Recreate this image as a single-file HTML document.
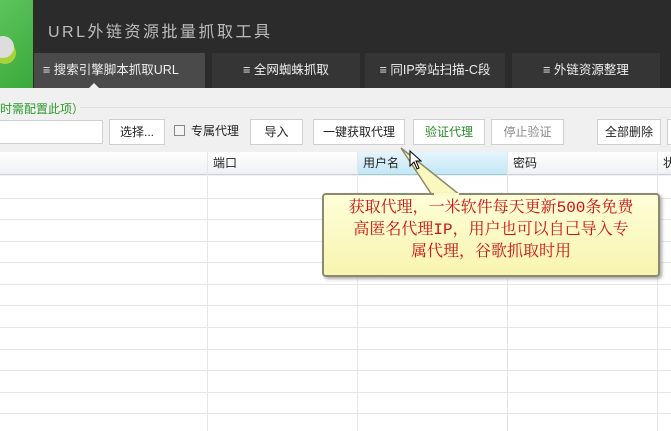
<!DOCTYPE html>
<html><head><meta charset="utf-8"><style>
*{margin:0;padding:0;box-sizing:border-box}
body{width:671px;height:431px;overflow:hidden;background:#f0f0f0;position:relative;font-family:"Liberation Sans","Noto Sans CJK SC",sans-serif;font-size:12px;color:#222}
.a{position:absolute}
.hdr{left:0;top:0;width:671px;height:88px;background:#2b2b2b}
.logo{left:0;top:0;width:33px;height:88px;background:linear-gradient(135deg,#5cc55c,#3aa83a)}
.title{left:48px;top:18px;color:#bdbdbd;font-size:16px;letter-spacing:2.5px}
.tab{top:53px;height:35px;background:#353535;color:#eee;font-size:12.5px;line-height:35px;text-align:center}
.btn{top:119px;height:26px;background:#fff;border:1px solid #cfcfcf;line-height:24px;text-align:center;font-size:12px}
.hl{left:0;width:671px;height:1px;background:#e6e6e6}
.vl{top:152px;width:1px;height:279px;background:#e6e6e6}
.th{top:152px;height:23px;line-height:23px;padding-left:6px;font-size:12px}
</style></head><body>
<div class="a hdr"></div>
<div class="a logo"></div>
<div class="a" style="left:-8px;top:36px;width:22px;height:22px;border-radius:50%;background:#ddd;box-shadow:2px 6px 0 #a8d13a"></div>
<div class="a title">URL外链资源批量抓取工具</div>
<div class="a tab" style="left:34px;width:171px;background:#4a4a4a;text-align:left;padding-left:9px">≡ 搜索引擎脚本抓取URL</div>
<div class="a" style="left:88px;top:83px;width:0;height:0;border-left:6px solid transparent;border-right:6px solid transparent;border-bottom:6px solid #f0f0f0"></div>
<div class="a tab" style="left:212px;width:148px">≡ 全网蜘蛛抓取</div>
<div class="a tab" style="left:365px;width:140px">≡ 同IP旁站扫描-C段</div>
<div class="a tab" style="left:512px;width:148px">≡ 外链资源整理</div>
<div class="a" style="left:0;top:100px;color:#2a9a2a;font-size:12px">时需配置此项）</div>
<div class="a" style="left:80px;top:107px;width:591px;height:1px;background:#ddd"></div>
<div class="a btn" style="left:-2px;width:105px;top:120px;height:24px"></div>
<div class="a btn" style="left:109px;width:56px">选择...</div>
<div class="a" style="left:174px;top:125px;width:11px;height:11px;border:1px solid #888;background:#f4f4f4"></div>
<div class="a" style="left:191px;top:122px">专属代理</div>
<div class="a btn" style="left:250px;width:53px">导入</div>
<div class="a btn" style="left:313px;width:92px">一键获取代理</div>
<div class="a btn" style="left:413px;width:72px;color:#2a8a2a">验证代理</div>
<div class="a btn" style="left:491px;width:73px;color:#888">停止验证</div>
<div class="a btn" style="left:597px;width:64px">全部删除</div>
<div class="a btn" style="left:667px;width:10px"></div>
<div class="a" style="left:0;top:152px;width:671px;height:23px;background:linear-gradient(#fff,#eef0f2);border-bottom:1px solid #ccd"></div>
<div class="a" style="left:357px;top:152px;width:150px;height:23px;background:linear-gradient(#e6f5fc,#c4e6f6);border-bottom:1px solid #9cc"></div>
<div class="a" style="left:0;top:176px;width:671px;height:255px;background:#fff"></div>
<div class="a hl" style="top:198px"></div><div class="a hl" style="top:219px"></div><div class="a hl" style="top:241px"></div><div class="a hl" style="top:262px"></div><div class="a hl" style="top:284px"></div><div class="a hl" style="top:305px"></div><div class="a hl" style="top:327px"></div><div class="a hl" style="top:349px"></div><div class="a hl" style="top:370px"></div><div class="a hl" style="top:392px"></div><div class="a hl" style="top:413px"></div>
<div class="a vl" style="left:207px"></div><div class="a vl" style="left:357px"></div><div class="a vl" style="left:507px"></div><div class="a vl" style="left:657px"></div>
<div class="a th" style="left:207px">端口</div>
<div class="a th" style="left:357px">用户名</div>
<div class="a th" style="left:507px">密码</div>
<div class="a th" style="left:657px">状</div>
<svg class="a" style="left:0;top:0" width="671" height="431">
<polygon points="401,148 432,195 460,195" fill="#fbf8bf" stroke="#8a8a6a" stroke-width="1.5"/>
<path d="M410,151 L410,166 L414,162 L417,169 L419,168 L416,161 L421,161 Z" fill="#fff" stroke="#000" stroke-width="1"/>
</svg>
<div class="a" style="left:322px;top:193px;width:338px;height:84px;background:linear-gradient(#fefed8,#f8f4b0);border:2px solid #8a8a70;border-radius:4px;box-shadow:2px 2px 3px #aaa;color:#d01010;font-family:'Liberation Mono','Noto Serif CJK SC',serif;font-size:16px;line-height:22px;text-align:center;padding-top:2px">获取代理，一米软件每天更新500条免费<br>高匿名代理IP，用户也可以自己导入专<br>属代理，谷歌抓取时用</div>
<div class="a" style="left:434px;top:193px;width:25px;height:3px;background:#fcfac6"></div>
</body></html>
